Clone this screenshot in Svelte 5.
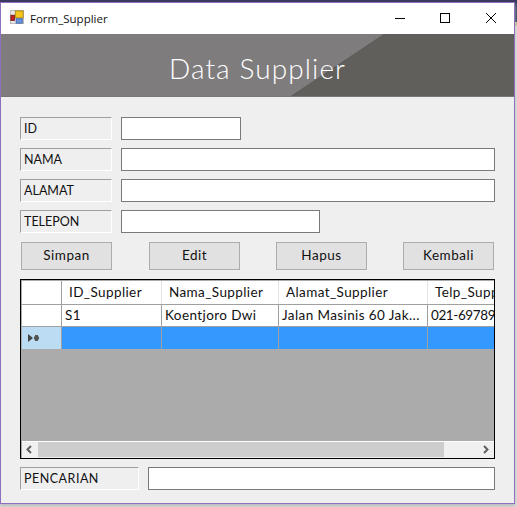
<script>
  const fields = [
    { label: 'ID', cls: 'short' },
    { label: 'NAMA', cls: '' },
    { label: 'ALAMAT', cls: '' },
    { label: 'TELEPON', cls: 'mid' }
  ];
  const buttons = ['Simpan', 'Edit', 'Hapus', 'Kembali'];
  const columns = [
    { name: 'ID_Supplier', value: 'S1', w: 100 },
    { name: 'Nama_Supplier', value: 'Koentjoro Dwi', w: 117 },
    { name: 'Alamat_Supplier', value: 'Jalan Masinis 60 Jak...', w: 149 },
    { name: 'Telp_Supplier', value: '021-6978901', w: 90 }
  ];
</script>

<div class="screen">
  <div class="window">
    <div class="titlebar">
      <svg class="appicon" width="14" height="14" viewBox="0 0 16 16">
        <rect x="0.5" y="0.5" width="15" height="15" fill="#e8e8e8" stroke="#b5b5b5" />
        <rect x="6" y="1" width="9" height="8" fill="#f5c518" stroke="#a8841c" />
        <rect x="1" y="6" width="4" height="6" fill="#c8201c" stroke="#7a1a1a" />
        <rect x="7" y="10" width="7" height="5" fill="#6a94dc" stroke="#3a64a8" />
      </svg>
      <span class="title">Form_Supplier</span>
      <div class="controls">
        <svg width="12" height="12" viewBox="0 0 12 12"><path d="M2 6.5H12" stroke="#000" fill="none" /></svg>
        <svg width="12" height="12" viewBox="0 0 12 12"><rect x="1.5" y="1.5" width="9" height="9" stroke="#000" fill="none" /></svg>
        <svg width="12" height="12" viewBox="0 0 12 12"><path d="M1 1L11 11M11 1L1 11" stroke="#000" fill="none" /></svg>
      </div>
    </div>

    <header class="banner">
      <h1>Data Supplier</h1>
    </header>

    <main class="body">
      <div class="fields">
        {#each fields as f}
          <div class="field">
            <div class="label">{f.label}</div>
            <div class="input {f.cls}"></div>
          </div>
        {/each}
      </div>

      <div class="buttons">
        {#each buttons as b}
          <div class="btn">{b}</div>
        {/each}
      </div>

      <div class="grid">
        <div class="row head">
          <div class="rowhead"></div>
          {#each columns as c}
            <div class="cell" style="flex-basis:{c.w}px">{c.name}</div>
          {/each}
        </div>
        <div class="row data">
          <div class="rowhead"></div>
          {#each columns as c}
            <div class="cell" style="flex-basis:{c.w}px">{c.value}</div>
          {/each}
        </div>
        <div class="row sel">
          <div class="rowhead">
            <svg width="16" height="8" viewBox="0 0 16 8">
              <path d="M1 0L6 4L1 8Z" fill="#444" />
              <path d="M7 2.5h5v3h-5zM8 1h3v6h-3z" fill="#555" />
            </svg>
          </div>
          {#each columns as c}
            <div class="cell" style="flex-basis:{c.w}px"></div>
          {/each}
        </div>
        <div class="empty"></div>
        <div class="scroll">
          <svg class="arrow" width="16" height="15" viewBox="0 0 16 15"><path d="M9 4L5.5 7.5L9 11" stroke="#606060" stroke-width="2" fill="none" /></svg>
          <div class="track"><div class="thumb"></div></div>
          <svg class="arrow" width="16" height="15" viewBox="0 0 16 15"><path d="M6 4L9.5 7.5L6 11" stroke="#606060" stroke-width="2" fill="none" /></svg>
        </div>
      </div>

      <div class="search">
        <div class="label wide">PENCARIAN</div>
        <div class="input grow"></div>
      </div>
    </main>
  </div>
</div>

<style>
  :global(body) {
    margin: 0;
    background: #e9e9e9;
  }
  .screen {
    width: 517px;
    height: 507px;
    overflow: hidden;
    box-sizing: border-box;
    border-top: 2px solid #3b3a5e;
    background: linear-gradient(#2f3f5e 0, #2f3f5e 20px, #c9bf94 20px, #c9bf94 24px, #dcdcdc 24px);
    font-family: "Lato", "Liberation Sans", sans-serif;
    color: #111;
  }
  .window {
    width: 515px;
    height: 502px;
    box-sizing: border-box;
    border: 1px solid #8e6fc0;
    background: #efefef;
    box-shadow: 0 2px 3px #bbb;
  }
  .titlebar {
    height: 31px;
    background: #fff;
    display: flex;
    align-items: center;
    padding-left: 9px;
  }
  .appicon { margin-top: -3px; }
  .title {
    margin-left: 6px;
    font: 11.5px "Open Sans", sans-serif;
    margin-top: -1px;
  }
  .controls {
    margin-left: auto;
    display: flex;
    gap: 34px;
    padding-right: 17px;
    margin-top: -2px;
  }
  .controls svg { display: block; }
  .banner {
    height: 63px;
    box-sizing: border-box;
    border-bottom: 1px solid #777;
    background: linear-gradient(146.3deg, #7f7c7d 0, #7f7c7d 212px, #615f5c 212.6px);
    display: flex;
    justify-content: center;
    align-items: center;
  }
  h1 {
    margin: 0 0 -5px 0;
    font: 300 28px "Lato", sans-serif;
    letter-spacing: 1.1px;
    color: #fff;
  }
  .body {
    padding: 20px 19px 0 19px;
  }
  .fields {
    display: flex;
    flex-direction: column;
    gap: 8px;
  }
  .field {
    display: flex;
    gap: 9px;
  }
  .label {
    width: 92px;
    height: 23px;
    box-sizing: border-box;
    border: 1px solid;
    border-color: #a0a0a0 #fff #fff #a0a0a0;
    font-size: 12.5px;
    line-height: 22px;
    padding-left: 3px;
  }
  .label.wide { width: 119px; letter-spacing: 0.5px; }
  .input {
    flex: 1;
    height: 23px;
    box-sizing: border-box;
    border: 1px solid #7a7a7a;
    background: #fff;
  }
  .input.short { flex: none; width: 120px; }
  .input.mid { flex: none; width: 199px; }
  .buttons {
    display: flex;
    gap: 36px;
    margin: 9px 1px 0 1px;
  }
  .btn {
    width: 91px;
    height: 28px;
    box-sizing: border-box;
    border: 1px solid #adadad;
    background: #e1e1e1;
    text-align: center;
    font-size: 13.5px;
    line-height: 25px;
    letter-spacing: 0.5px;
  }
  .btn:first-child { margin-right: 1px; }
  .grid {
    margin-top: 9px;
    height: 180px;
    box-sizing: border-box;
    border: 1px solid #000;
    background: #ababab;
    display: flex;
    flex-direction: column;
    padding: 1px 0 0 1px;
    overflow: hidden;
  }
  .row {
    display: flex;
    flex: none;
    font-size: 13.5px;
    letter-spacing: 0.4px;
  }
  .head { height: 24px; background: #fff; border-bottom: 1px solid #a0a0a0; box-sizing: border-box; }
  .data { height: 22px; background: #fff; border-bottom: 1px solid #a0a0a0; box-sizing: border-box; }
  .sel { height: 22px; background: #3399ff; }
  .rowhead {
    flex: none;
    width: 40px;
    box-sizing: border-box;
    border-right: 1px solid #a0a0a0;
    background: #fff;
    display: flex;
    align-items: center;
    padding-left: 5px;
  }
  .sel .rowhead { background: #bcdcf4; }
  .cell {
    flex: none;
    box-sizing: border-box;
    border-right: 1px solid #a0a0a0;
    white-space: nowrap;
    overflow: hidden;
    padding-left: 3px;
    line-height: 20px;
  }
  .head .cell {
    padding-left: 7px;
    line-height: 22px;
    border-right-color: #e3e3e3;
  }
  .data .cell:last-child { letter-spacing: -0.4px; }
  .empty {
    flex: 1;
    border-bottom: 1px solid #fff;
  }
  .scroll {
    flex: none;
    height: 16px;
    background: #f0f0f0;
    display: flex;
  }
  .arrow { flex: none; display: block; }
  .track { flex: 1; }
  .thumb { width: 406px; height: 15px; background: #cdcdcd; }
  .search {
    display: flex;
    gap: 9px;
    margin-top: 8px;
  }
</style>
